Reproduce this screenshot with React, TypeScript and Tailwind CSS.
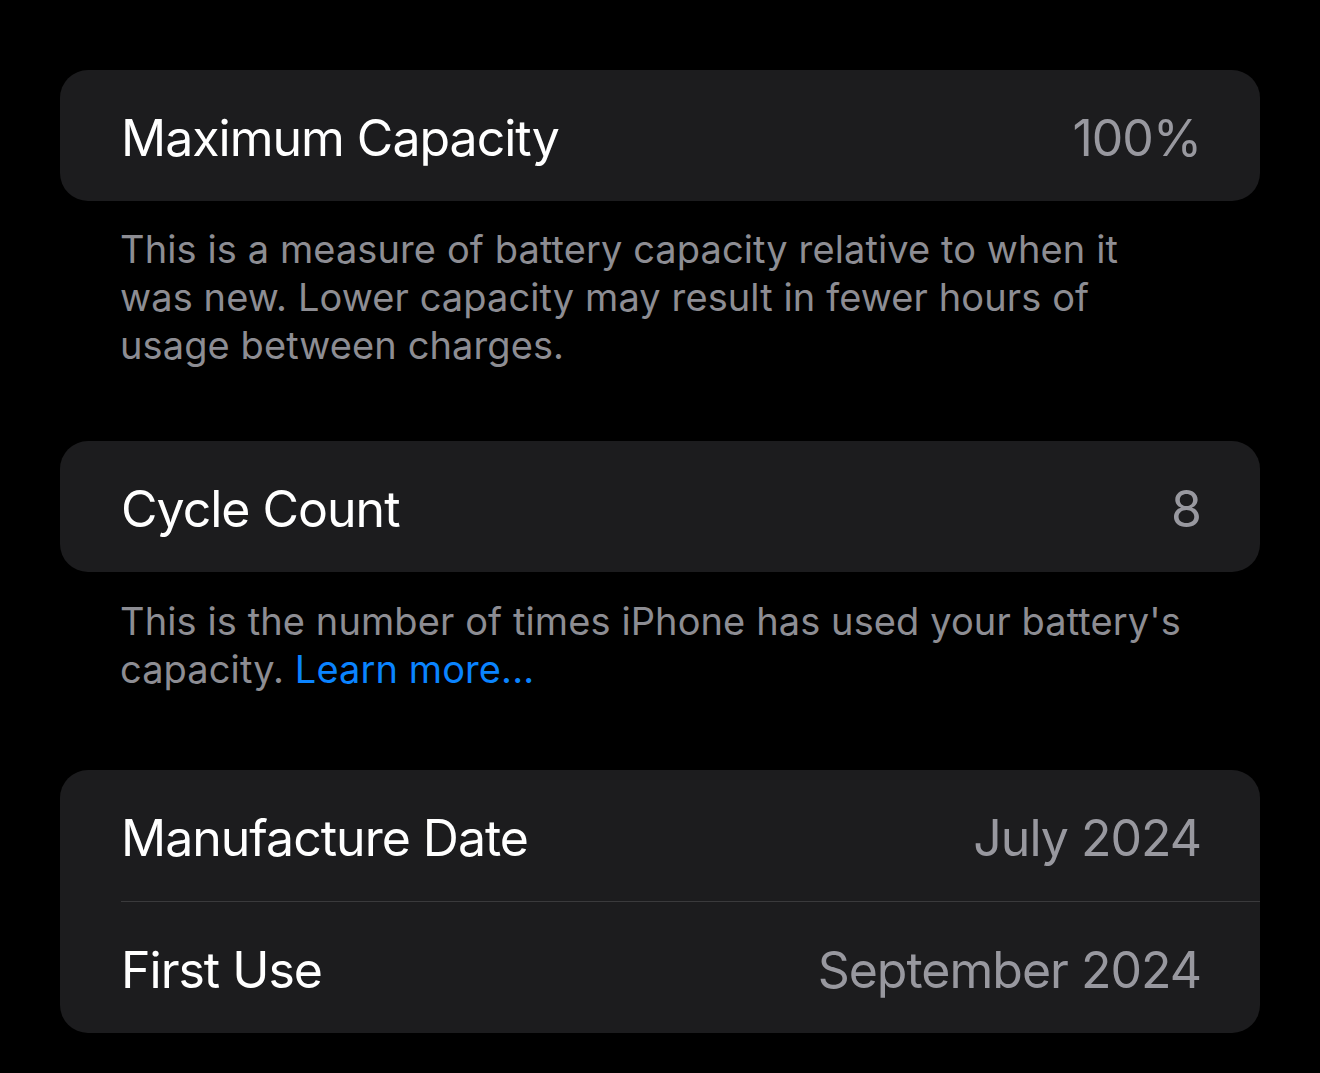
import React from "react";

const font = { fontFamily: "Inter, 'Liberation Sans', sans-serif" };

interface RowProps {
  label: string;
  value: string;
}

const Row = ({ label, value }: RowProps) => (
  <div className="flex h-[131px] items-center justify-between pl-[61px] pr-[59px] pt-[4px]">
    <span className="text-[50px] leading-none text-white tracking-[-1px]">{label}</span>
    <span className="text-[50px] leading-none text-[#98989f] tracking-[-1px]">{value}</span>
  </div>
);

const Note = ({ children, className }: { children: React.ReactNode; className: string }) => (
  <p className={`pl-[60px] text-[38px] leading-[48px] tracking-[0.1px] text-[#8d8d93] ${className}`}>
    {children}
  </p>
);

export default function App() {
  return (
    <div style={font} className="min-h-[1073px] w-full bg-black px-[60px] pt-[70px]">
      <div className="rounded-[28px] bg-[#1c1c1e]">
        <Row label="Maximum Capacity" value="100%" />
      </div>
      <Note className="pt-[24px] pb-[72px]">
        This is a measure of battery capacity relative to when it
        <br />
        was new. Lower capacity may result in fewer hours of
        <br />
        usage between charges.
      </Note>

      <div className="rounded-[28px] bg-[#1c1c1e]">
        <Row label="Cycle Count" value="8" />
      </div>
      <Note className="pt-[25px] pb-[77px]">
        This is the number of times iPhone has used your battery's
        <br />
        capacity. <span className="text-[#0a84ff]">Learn more...</span>
      </Note>

      <div className="overflow-hidden rounded-[28px] bg-[#1c1c1e]">
        <Row label="Manufacture Date" value="July 2024" />
        <div className="ml-[61px] h-px bg-[#3a3a3c]" />
        <Row label="First Use" value="September 2024" />
      </div>
    </div>
  );
}
